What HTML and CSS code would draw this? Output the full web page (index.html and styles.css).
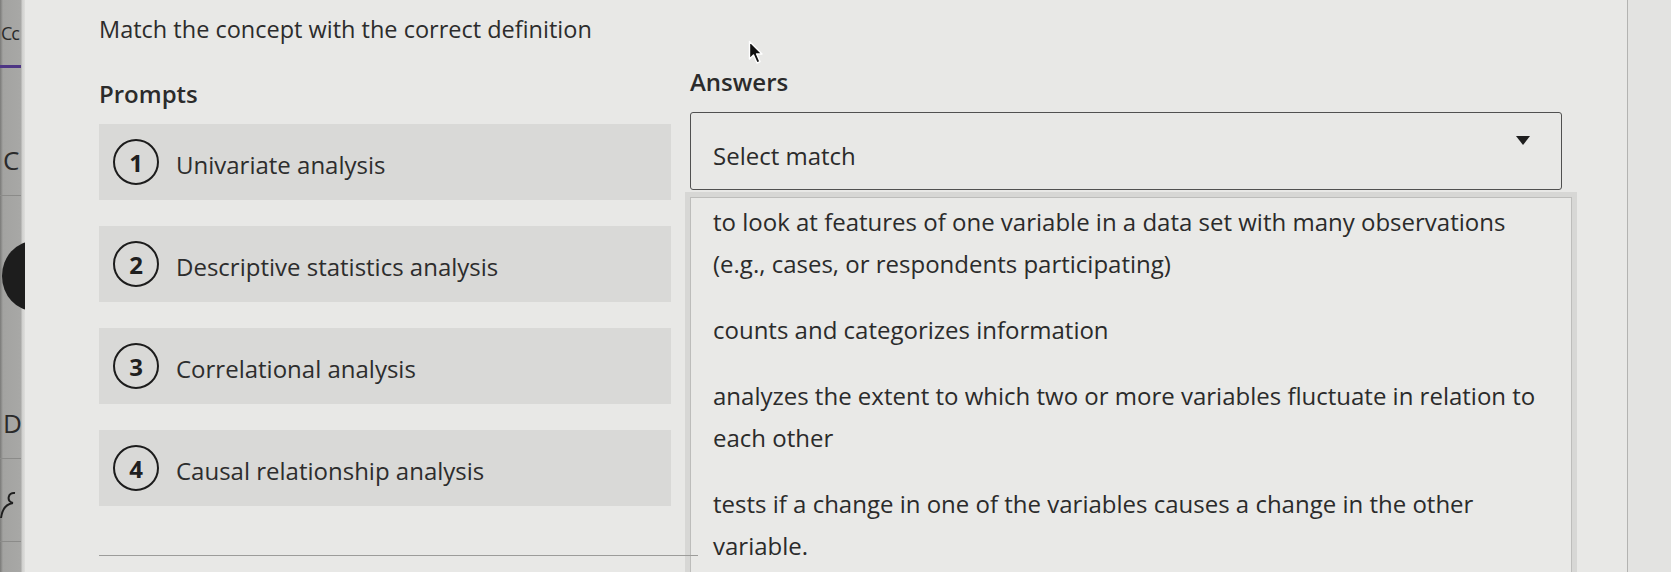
FILE: index.html
```html
<!DOCTYPE html>
<html lang="en">
<head>
<meta charset="utf-8">
<title>Match the concept with the correct definition</title>
<link rel="stylesheet" href="styles.css">
</head>
<body>
  <aside class="rail">
    <div class="rail-text rail-top">Cc</div>
    <div class="rail-bar"></div>
    <div class="rail-text rail-c">C</div>
    <div class="rail-line"></div>
    <div class="rail-disc"></div>
    <div class="rail-text rail-d">D</div>
    <div class="rail-line"></div>
    <svg class="rail-user" width="22" height="40" viewBox="0 0 22 40"><path d="M15 4 C8 3 6 12 13 14 M13 14 C6 15 2 21 1 29" fill="none" stroke="#1f1f1f" stroke-width="2"/></svg>
    <div class="rail-line rail-line-bottom"></div>
  </aside>

  <main class="page">
    <h1 class="title">Match the concept with the correct definition</h1>
    <div class="cols">
      <section class="prompts">
        <h2 class="heading heading-prompts">Prompts</h2>
        <ul class="rows">
          <li class="row"><span class="num">1</span><span class="label">Univariate analysis</span></li>
          <li class="row"><span class="num">2</span><span class="label">Descriptive statistics analysis</span></li>
          <li class="row"><span class="num">3</span><span class="label">Correlational analysis</span></li>
          <li class="row"><span class="num">4</span><span class="label">Causal relationship analysis</span></li>
        </ul>
        <div class="rule"></div>
      </section>

      <section class="answers">
        <h2 class="heading heading-answers">Answers</h2>
        <div class="select"><span>Select match</span><span class="caret"></span></div>
        <ul class="options">
          <li>to look at features of one variable in a data set with many observations (e.g., cases, or respondents participating)</li>
          <li>counts and categorizes information</li>
          <li>analyzes the extent to which two or more variables fluctuate in relation to each other</li>
          <li>tests if a change in one of the variables causes a change in the other variable.</li>
        </ul>
      </section>
    </div>
  </main>
  <div class="gutter"></div>

  <svg class="cursor" width="18" height="26" viewBox="0 0 18 26"><path d="M1.5 1.5 L1.5 19 L5.5 15 L9 23 L12 21.6 L8.6 14 L14 14 Z" fill="#111" stroke="#fff" stroke-width="1.4" stroke-linejoin="round"/></svg>
</body>
</html>
```

FILE: styles.css
```css
* { box-sizing: border-box; }

html, body {
  margin: 0;
  padding: 0;
  height: 100%;
}

body {
  display: flex;
  background: #e4e4e2;
  font-family: "Open Sans", "Noto Sans", sans-serif;
  color: #2b2b2b;
  overflow: hidden;
  position: relative;
}

/* left rail */
.rail {
  width: 25px;
  flex: none;
  background: linear-gradient(to right, #7a7a78 0, #a3a3a1 3px, #a8a8a6 21px, #cfcfcd 22px, #dededc 25px);
  display: flex;
  flex-direction: column;
  overflow: hidden;
}
.rail-text {
  font-family: "Open Sans", sans-serif;
  color: #2a2a2a;
  line-height: 1;
  padding-left: 2px;
  white-space: nowrap;
}
.rail-top { font-size: 18px; margin-top: 24px; padding-left: 1px; letter-spacing: -1px; }
.rail-bar {
  height: 3px;
  width: 21px;
  background: #4e3684;
  margin-top: 23px;
}
.rail-c { font-size: 26px; margin-top: 79px; padding-left: 3px; }
.rail-line {
  height: 1px;
  width: 21px;
  background: #8b8b89;
  margin-top: 22px;
}
.rail-disc {
  width: 64px;
  height: 70px;
  border-radius: 50%;
  background: #1d1d1d;
  margin-top: 45px;
  margin-left: 2px;
  flex: none;
}
.rail-d { font-size: 26px; margin-top: 99px; padding-left: 3px; }
.rail-user { margin-top: 30px; flex: none; }
.rail-line-bottom { margin-top: 12px; }

/* page */
.page {
  width: 1603px;
  flex: none;
  background: #e8e8e6;
  border-right: 1px solid #b3b3b1;
  padding-left: 74px;
}
.gutter {
  flex: 1;
  background: #e3e3e1;
}

.title {
  margin: 13px 0 0;
  font-size: 23.5px;
  line-height: 32px;
  font-weight: 400;
  color: #2c2c2c;
}

.cols {
  display: grid;
  grid-template-columns: 572px 882px;
  column-gap: 19px;
}

.heading {
  margin: 0;
  font-size: 24px;
  line-height: 32px;
  font-weight: 600;
  color: #2b2b2b;
}
.heading-prompts { margin-top: 33px; }
.heading-answers { margin-top: 21px; }

.rows {
  list-style: none;
  margin: 14px 0 0;
  padding: 0;
  display: flex;
  flex-direction: column;
  gap: 26px;
}
.row {
  height: 76px;
  background: #d9d9d7;
  display: flex;
  align-items: center;
  padding-left: 14px;
  gap: 17px;
}
.num {
  width: 46px;
  height: 46px;
  border: 2.5px solid #1c1c1c;
  border-radius: 50%;
  display: flex;
  align-items: center;
  justify-content: center;
  font-size: 24px;
  font-weight: 700;
  color: #1f1f1f;
  flex: none;
}
.label {
  font-size: 24px;
  color: #2d2d2d;
  padding-top: 4px;
}

.rule {
  position: relative;
  z-index: 1;
  height: 1px;
  background: #9c9c9a;
  margin-top: 49px;
  width: 599px;
}

/* answers */
.select {
  margin-top: 14px;
  height: 78px;
  width: 872px;
  border: 1.5px solid #505050;
  border-radius: 3px;
  display: flex;
  align-items: center;
  justify-content: space-between;
  padding: 0 31px 0 22px;
  font-size: 24px;
  color: #2b2b2b;
}
.select span:first-child { padding-top: 8px; }
.caret {
  width: 0;
  height: 0;
  border-left: 7px solid transparent;
  border-right: 7px solid transparent;
  border-top: 9px solid #1e1e1e;
  margin-top: -22px;
}

.options {
  list-style: none;
  margin: 7px 0 0;
  padding: 3px 16px 0 22px;
  border: 1px solid #bdbdbb;
  box-shadow: 0 0 0 5px #d7d7d5;
  background: #e9e9e7;
  height: 420px;
  display: flex;
  flex-direction: column;
  gap: 24px;
}
.options li {
  font-size: 24px;
  line-height: 42px;
  color: #2b2b2b;
}

.cursor {
  position: absolute;
  left: 748px;
  top: 40px;
}
```
